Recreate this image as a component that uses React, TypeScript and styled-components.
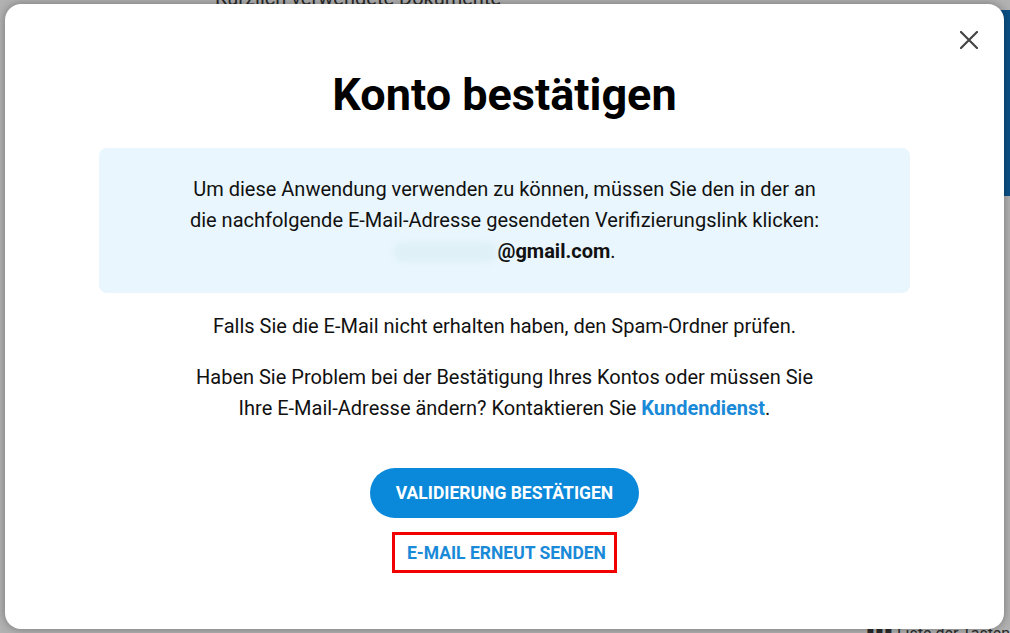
import styled, { createGlobalStyle } from 'styled-components'

const GlobalStyle = createGlobalStyle`
  html, body {
    margin: 0;
    padding: 0;
    width: 1010px;
    height: 633px;
    overflow: hidden;
    font-family: Roboto, 'Liberation Sans', Arial, sans-serif;
  }
`

// dimmed page behind the dialog
const Backdrop = styled.div`
  position: relative;
  width: 1010px;
  height: 633px;
  background: #b2b2b2;
  overflow: hidden;
`

const BackText = styled.span<{ $x: number; $y: number; $size?: number }>`
  position: absolute;
  left: ${(p) => p.$x}px;
  top: ${(p) => p.$y}px;
  font-size: ${(p) => p.$size ?? 16}px;
  color: #2a2a2a;
  white-space: nowrap;
`

const BlueStrip = styled.div`
  position: absolute;
  right: 0;
  top: 10px;
  width: 12px;
  height: 186px;
  background: #0b5187;
`

const Dialog = styled.div`
  position: absolute;
  left: 5px;
  top: 4px;
  width: 999px;
  height: 625px;
  box-sizing: border-box;
  background: #fff;
  border-radius: 16px;
  box-shadow: 0 0 10px rgba(0, 0, 0, 0.35);
  display: flex;
  flex-direction: column;
  align-items: center;
  padding: 60px 94px 0;
  color: #111;
`

const CloseButton = styled.button`
  position: absolute;
  top: 21px;
  right: 20px;
  width: 30px;
  height: 30px;
  border: none;
  background: transparent;
  padding: 0;
  display: flex;
  align-items: center;
  justify-content: center;
  cursor: pointer;
`

const Title = styled.h1`
  margin: 0;
  font-size: 45px;
  line-height: 62px;
  font-weight: 700;
  color: #000;
`

const InfoBox = styled.div`
  margin-top: 22px;
  align-self: stretch;
  background: #e9f6fd;
  border-radius: 8px;
  padding: 26px 10px 26px;
  text-align: center;
  font-size: 20px;
  line-height: 31px;
`

const Paragraph = styled.p<{ $gap?: number }>`
  margin: ${(p) => p.$gap ?? 18}px 0 0;
  text-align: center;
  font-size: 20px;
  line-height: 31px;
`

const Hidden = styled.span`
  display: inline-block;
  width: 104px;
  height: 20px;
  vertical-align: -4px;
  border-radius: 10px;
  background: #dff0f7;
  filter: blur(3px);
`

const Strong = styled.b`
  font-weight: 700;
`

const Link = styled.a`
  color: #1a8ad8;
  font-weight: 700;
  text-decoration: none;
`

const PrimaryButton = styled.button`
  margin-top: 44px;
  height: 50px;
  padding: 0 26px;
  border: none;
  border-radius: 25px;
  background: #0a89db;
  color: #fff;
  font-family: inherit;
  font-size: 17.5px;
  font-weight: 700;
  cursor: pointer;
`

const TextButton = styled.button`
  margin-top: 14px;
  height: 41px;
  padding: 0 8px 0 12px;
  border: 3px solid #f20000;
  background: #fff;
  color: #1a8ad8;
  font-family: inherit;
  font-size: 17.5px;
  font-weight: 700;
  cursor: pointer;
`

const App = () => {
  return (
    <>
      <GlobalStyle />
      <Backdrop>
        <BackText $x={215} $y={-14} $size={20}>
          Kürzlich verwendete Dokumente
        </BackText>
        <BlueStrip />
        <BackText $x={866} $y={624}>
          ▮▮▮ Liste der Tastenkürzel
        </BackText>
        <Dialog>
          <CloseButton aria-label="Schließen">
            <svg width="18" height="18" viewBox="0 0 18 18">
              <path d="M1 1 L17 17 M17 1 L1 17" stroke="#444" strokeWidth="2.2" strokeLinecap="round" />
            </svg>
          </CloseButton>
          <Title>Konto bestätigen</Title>
          <InfoBox>
            Um diese Anwendung verwenden zu können, müssen Sie den in der an
            <br />
            die nachfolgende E-Mail-Adresse gesendeten Verifizierungslink klicken:
            <br />
            <Hidden />
            <Strong>@gmail.com</Strong>.
          </InfoBox>
          <Paragraph>Falls Sie die E-Mail nicht erhalten haben, den Spam-Ordner prüfen.</Paragraph>
          <Paragraph $gap={20}>
            Haben Sie Problem bei der Bestätigung Ihres Kontos oder müssen Sie
            <br />
            Ihre E-Mail-Adresse ändern? Kontaktieren Sie <Link href="#">Kundendienst</Link>.
          </Paragraph>
          <PrimaryButton>VALIDIERUNG BESTÄTIGEN</PrimaryButton>
          <TextButton>E-MAIL ERNEUT SENDEN</TextButton>
        </Dialog>
      </Backdrop>
    </>
  )
}

export default App
